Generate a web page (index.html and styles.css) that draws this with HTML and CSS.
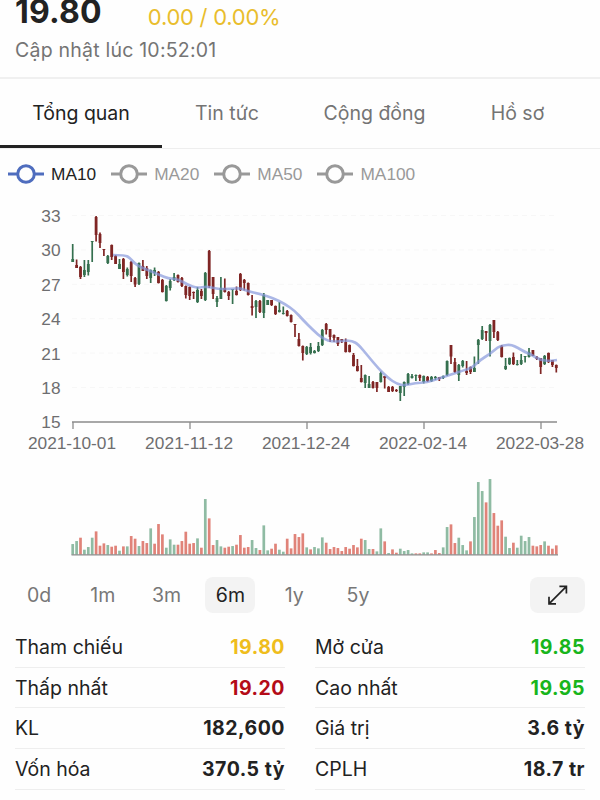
FILE: index.html
```html
<!DOCTYPE html>
<html lang="vi">
<head>
  <meta charset="UTF-8" />
  <meta name="viewport" content="width=device-width, initial-scale=1.0"/>
  <title>Tổng quan cổ phiếu</title>
  <link rel="stylesheet" href="styles.css">
</head>
<body>
  <header class="header">
    <div class="quote">
      <span class="price">19.80</span>
      <span class="change">0.00 / 0.00%</span>
    </div>
    <div class="updated">Cập nhật lúc 10:52:01</div>
  </header>

  <nav class="tabs">
    <a class="tab active">Tổng quan</a>
    <a class="tab news">Tin tức</a>
    <a class="tab community">Cộng đồng</a>
    <a class="tab profile">Hồ sơ</a>
  </nav>

  <div class="legend">
    <span class="legend-item on"><svg width="36" height="22" viewBox="0 0 36 22"><path d="M0 11h9M27 11h9"/><circle cx="18" cy="11" r="8.3"/></svg>MA10</span>
    <span class="legend-item"><svg width="36" height="22" viewBox="0 0 36 22"><path d="M0 11h9M27 11h9"/><circle cx="18" cy="11" r="8.3"/></svg>MA20</span>
    <span class="legend-item"><svg width="36" height="22" viewBox="0 0 36 22"><path d="M0 11h9M27 11h9"/><circle cx="18" cy="11" r="8.3"/></svg>MA50</span>
    <span class="legend-item"><svg width="36" height="22" viewBox="0 0 36 22"><path d="M0 11h9M27 11h9"/><circle cx="18" cy="11" r="8.3"/></svg>MA100</span>
  </div>

  <svg class="chart" id="chart" viewBox="0 200 600 370" width="600" height="370"></svg>

  <div class="ranges">
    <button class="range">0d</button>
    <button class="range">1m</button>
    <button class="range">3m</button>
    <button class="range selected">6m</button>
    <button class="range">1y</button>
    <button class="range">5y</button>
    <button class="expand" aria-label="Phóng to">
      <svg width="20" height="20" viewBox="0 0 20 20"><path d="M1.2 18.6 18.2 1.6M11.4 1.4h7v7M1 11.8v7h7"/></svg>
    </button>
  </div>

  <div class="stats">
    <div class="stat"><span>Tham chiếu</span><strong class="yellow">19.80</strong></div>
    <div class="stat"><span>Mở cửa</span><strong class="green">19.85</strong></div>
    <div class="stat"><span>Thấp nhất</span><strong class="red">19.20</strong></div>
    <div class="stat"><span>Cao nhất</span><strong class="green">19.95</strong></div>
    <div class="stat"><span>KL</span><strong>182,600</strong></div>
    <div class="stat"><span>Giá trị</span><strong>3.6 tỷ</strong></div>
    <div class="stat"><span>Vốn hóa</span><strong>370.5 tỷ</strong></div>
    <div class="stat"><span>CPLH</span><strong>18.7 tr</strong></div>
  </div>

  <script src="chart.js"></script>
</body>
</html>
```

FILE: styles.css
```css
body {
  margin: 0;
  width: 600px;
  height: 800px;
  overflow: hidden;
  background: #fefefe;
  color: #222;
  font-family: Inter, 'Noto Sans', sans-serif;
}
.header {
  display: flex;
  flex-direction: column;
  box-sizing: border-box;
  height: 79px;
  padding: 0 15px;
  border-bottom: 2px solid #f0f0f0;
}
.quote {
  display: flex;
  align-items: flex-start;
  gap: 46px;
  height: 37px;
}
.price {
  font-size: 32px;
  font-weight: 700;
  line-height: 23px;
  letter-spacing: 0.2px;
}
.change {
  color: #e9bd2c;
  font-size: 22px;
  line-height: 34px;
  letter-spacing: -0.25px;
}
.updated {
  color: #747474;
  font-size: 19.5px;
  line-height: 26px;
  letter-spacing: 0.22px;
}
.tabs {
  display: flex;
  box-sizing: border-box;
  height: 70px;
  border-bottom: 1px solid #eee;
}
.tab {
  box-sizing: border-box;
  height: 69px;
  color: #747474;
  font-size: 19.5px;
  line-height: 68px;
  text-align: center;
}
.active {
  width: 162px;
  color: #222;
  border-bottom: 3px solid #222;
}
.news {
  width: 130px;
}
.community {
  width: 165px;
}
.profile {
  width: 121px;
}
.legend {
  display: flex;
  gap: 15px;
  height: 51px;
  padding-left: 8px;
  color: #999;
  font: 17.3px/50px 'Liberation Sans', sans-serif;
}
.legend-item {
  display: flex;
  align-items: center;
  gap: 7px;
  height: 50px;
}
.legend svg {
  fill: none;
  stroke: #999;
  stroke-width: 3;
}
.legend .on {
  color: #222;
}
.legend .on svg {
  stroke: #4f6dbe;
}
.chart {
  display: block;
}
.chart text {
  fill: #6e6e70;
  font: 17.3px 'Liberation Sans', sans-serif;
}
.ranges {
  display: flex;
  align-items: center;
  height: 50px;
  padding: 0 15px 0 14px;
}
.range {
  width: 50px;
  height: 36px;
  margin-right: 13.8px;
  padding: 0;
  border: none;
  border-radius: 8px;
  background: none;
  color: #777;
  font: 19.5px Inter, sans-serif;
}
.selected {
  background: #f3f3f3;
  color: #222;
}
.expand {
  display: flex;
  align-items: center;
  justify-content: center;
  width: 55px;
  height: 36px;
  margin-left: auto;
  padding: 0;
  border: none;
  border-radius: 8px;
  background: #f3f3f3;
}
.expand svg {
  fill: none;
  stroke: #222;
  stroke-width: 1.7;
}
.stats {
  display: grid;
  grid-template-columns: 270px 270px;
  column-gap: 30px;
  padding: 7px 15px 0;
}
.stat {
  display: flex;
  box-sizing: border-box;
  justify-content: space-between;
  height: 40.7px;
  border-bottom: 1px solid #eee;
  font-size: 19.5px;
  line-height: 41px;
}
.stat strong {
  font-weight: 700;
  letter-spacing: 0.5px;
}
.yellow {
  color: #efbd1c;
}
.red {
  color: #b40b17;
}
.green {
  color: #18b51c;
}
```

FILE: chart.js
```js
const GREEN = '#35704f', RED = '#7f2524';
const LEFT = 72.7, STEP = 3.9;

// direction, high, low, body top, body bottom
const candles = `
G 244 262 259 262|R 259.5 268 265 268|R 266 279 267 277|G 260 277 270 275|G 260 275.5 264 272
G 241 262 241 242|R 216 241.5 217 235|R 232.5 248 234 243|R 249 256 249 250|G 255 264 256 263
R 244.5 260 245 257|R 255 264 256 264|G 259 269 264 269|R 258 279 259 272|G 267.5 276.5 269 275
R 261 282 262 276|R 277 287 278 284.5|G 262.5 285 263 284|R 260 271 266 271|R 266 279 268 276
G 269.5 283 270 278|G 267.5 276 270 273|R 271 283.5 272 283|R 279 292.5 280 292|G 285 301.5 286 301
G 279 290.5 281 288|G 273 281 277 280|R 274.5 282.5 275 282|R 277 287 278 286|R 285.5 298.5 286 295
R 286.5 300 287 296|R 291.5 299 292 293|G 287 303 290 302|R 289 299 291 296|G 272 301 273 300
R 250 288 251 286|R 277 299 277 294|G 296 307 298 302|G 277 299 288 299|R 278.5 292.5 288 292
R 291 300 292 296|G 289 304 289 290|R 286.5 295.5 291 295|R 273 291 274 290|R 279 290.5 280 283
R 282.5 295.5 283 295|R 295 315.5 306 308|G 300 318 301 307|R 300 313 301 312|G 293 318 295 313
G 300 305 300 305|R 300 306 300 305|R 305.5 315 306 314|G 302 312.5 310 312|G 306.5 314.5 313 314
R 310 316.5 311 316|R 314.5 322.5 315 322|R 324 337 324 325|R 333 346.5 339 346|R 345.5 360.5 346 353
G 346 355 347 354|G 343 354.5 347 353|G 350 353.5 351 353|G 342 352 346 351|G 329 346 330 345
R 323 334.5 324 330|R 329 342 329 337|R 334.5 342 335 338|R 337 346 337 344|R 339 343 339 341
R 338.5 352.5 342 352|R 344.5 352.5 345 352|R 353 366.5 355 366|R 359 371.5 366 371|R 365 382.5 378 382
G 374.5 388 375 383|G 376 388 384 388|R 381 388.5 382 388|R 382 392 382 388|G 371.5 382.5 373 382
R 376 388.5 376 378|R 386 392 387 392|R 386 392 387 391|R 389 392 390 391|G 386 401 386 393
G 381.5 396 382 387|G 373 385 374 384|G 374 378.5 376 378|G 374.5 381 375 376|R 374.5 381 375 378
G 375.5 383.5 376 382|R 376 382 377 381|G 376 382 377 381|G 376 380 377 378|R 377 381 377 379
G 375.5 379 376 378|G 360.5 376 361 375|R 345 364 345 356.5|R 358 373 362 372|G 364 381 365 375
G 360 367.5 361 366|R 361 375 371 373|R 366.5 374 367 372|G 356.5 372 368 372|G 339 364 340 345
G 326 340 330 339|R 331 341 331 333|G 324 356.5 325 341|R 320 338 320 332|R 331 341 332 340
R 345 357.5 346 357|G 358 370 366 369|G 357.5 365 358 364|R 352.5 365 357 364|G 360 365.5 364 365
G 354 365 360 364|G 356 362.5 356 357|G 348 357.5 352 357|R 350 356 350 356|R 356 360 357 359
R 358 374 358 367|G 355 365 356 364|R 352.5 363 353 362|R 360 367 360 365|R 364.5 372.5 365 368
`.trim().split(/[|\n]/).map(row => row.split(' '));

const volumes = `
G32 G41 R51 G15 G23 G51 R70 R27 R34 G29 R24 R27 G12 R25 G25 R56 R48 G26 R41 R35
G79 R33 R92 R61 G21 G46 G30 R30 R41 R69 R33 R35 G49 R21 G167 R109 R29 G44 G25 R21
R24 G26 R30 R59 R21 R23 G44 G20 R14 G88 G13 R18 R33 G15 G9 R48 R19 R62 R53 R64
G22 R16 G23 G19 G52 R36 R17 R23 R20 R11 R23 R18 R29 R22 R48 G44 G17 R17 G10 G79
R40 G5 R16 R6 G18 G11 G14 G4 R4 R4 G7 G7 R4 R14 R5 G22 G83 R91 R35 G51
G29 G13 R40 G113 G218 G191 R157 G227 R125 R87 R103 G54 G20 R36 G21 G57 G41 G53 R27 R25
R29 G40 R27 R18 R28
`.trim().split(/\s+/);

const ma10 = [
  [113,255],[125,255],[130,258],[136,265],[150,271],[160,275],[168,278.5],[178,279],[188,285],[197,288],
  [207,286.5],[218,289],[230,289],[240,288],[247,291],[260,294],[273,298],[285,304],[295,311],[303,320],
  [313,330],[323,339],[333,342],[345,340.5],[352,341],[358,344],[368,356],[378,368],[388,378],[397,384],
  [405,385.5],[415,383],[427,382.5],[440,378],[453,374],[463,370.5],[472,368],[480,360],[490,354],[498,347],
  [503,345.5],[511,344.5],[518,348],[525,352],[532,355],[540,360],[550,361],[557,360]
];

let out = '';

// price axis
[33, 30, 27, 24, 21, 18, 15].forEach((value, i) => {
  const y = 215.5 + i * 34.4;
  if (value > 15) out += `<path d="M72 ${y}H557" stroke="#f7f7f7" stroke-dasharray="5 4"/>`;
  out += `<text x="60.5" y="${y + 6.5}" text-anchor="end">${value}</text>`;
});

// date axis
out += '<path d="M72 422H557" stroke="#8b8b8b" stroke-width="1.4"/>';
['2021-10-01', '2021-11-12', '2021-12-24', '2022-02-14', '2022-03-28'].forEach((date, i) => {
  const x = 73 + i * 117;
  out += `<path d="M${x} 422v7" stroke="#8b8b8b" stroke-width="1.3"/>`;
  out += `<text x="${x - 1}" y="448.5" text-anchor="middle" textLength="88">${date}</text>`;
});

candles.forEach(([dir, high, low, top, bottom], i) => {
  const x = LEFT + i * STEP;
  const color = dir === 'G' ? GREEN : RED;
  out += `<path d="M${x} ${high}V${low}" stroke="${color}" stroke-width="1.7"/>`;
  out += `<rect x="${x - 1.4}" y="${top}" width="2.8" height="${bottom - top}" fill="${color}"/>`;
});

// moving average, smoothed through the midpoints
let line = `M${ma10[0]}`;
for (let i = 1; i < ma10.length - 1; i++) {
  const [x, y] = ma10[i], [nx, ny] = ma10[i + 1];
  line += `Q${x} ${y} ${(x + nx) / 2} ${(y + ny) / 2}`;
}
line += `L${ma10[ma10.length - 1]}`;
out += `<path d="${line}" fill="none" stroke="#8799dc" stroke-width="2.7" opacity=".7"/>`;

volumes.forEach((v, i) => {
  const h = v.slice(1) / 3;
  out += `<rect x="${LEFT + i * STEP - 1.35}" y="${554.7 - h}" width="2.7" height="${h}" fill="${v[0] === 'G' ? '#8fbba3' : '#e08379'}"/>`;
});
out += '<path d="M71.5 554.8H558" stroke="#8b8b8b" stroke-width="1.2"/>';

document.getElementById('chart').innerHTML = out;
```
